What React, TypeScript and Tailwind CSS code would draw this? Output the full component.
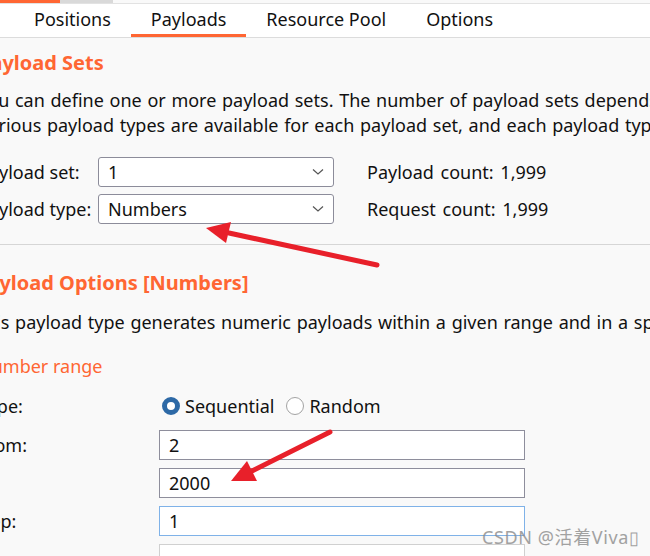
import React from "react";

const Chevron = () => (
  <svg width="12" height="8" viewBox="0 0 12 8" className="shrink-0">
    <path d="M1 1.5 L6 6 L11 1.5" fill="none" stroke="#555" strokeWidth="1.2" />
  </svg>
);

function Select({ value }: { value: string }) {
  return (
    <div className="flex h-[30px] w-[236px] items-center justify-between rounded-[3px] border border-[#8c8c9a] bg-white pl-[9px] pr-[9px]">
      <span>{value}</span>
      <Chevron />
    </div>
  );
}

function Field({ value, variant = "normal" }: { value: string; variant?: "normal" | "focus" | "light" }) {
  const border =
    variant === "focus"
      ? "border-[#7fb2e8]"
      : variant === "light"
      ? "border-[#d0d0d0]"
      : "border-[#8e8e9c]";
  return (
    <div className={`flex h-[30px] w-[366px] items-center border ${border} bg-white pl-[9px]`}>
      {value}
    </div>
  );
}

export default function App() {
  return (
    <div className="relative h-[556px] w-[650px] overflow-hidden bg-[#f9f9f9] font-['Noto_Sans','Noto_Sans_CJK_SC',sans-serif] text-[18px] text-[#111]">
      <div className="flex h-[3px]">
        <div className="w-[60px] bg-[#ff6633]" />
        <div className="w-[53px] bg-[#d9d9d9]" />
      </div>
      <div className="h-px bg-[#e2e2e2]" />
      <div className="flex h-[34px] border-b border-[#dcdcdc] bg-white pl-[14px] leading-none">
        <div className="flex items-center border-b-[3px] border-transparent px-5">Positions</div>
        <div className="flex items-center border-b-[3px] border-[#ff6633] px-5">Payloads</div>
        <div className="flex items-center border-b-[3px] border-transparent px-5">Resource Pool</div>
        <div className="flex items-center border-b-[3px] border-transparent px-5">Options</div>
      </div>

      <div className="-ml-[22px] w-[720px]">
        <div className="mt-[11px] text-[20px] font-bold leading-[28px] text-[#ff6633]">Payload Sets</div>
        <div className="mt-[11px] whitespace-nowrap leading-[25px] [word-spacing:1px]">
          <div>You can define one or more payload sets. The number of payload sets depends on the attack type</div>
          <div>Various payload types are available for each payload set, and each payload type can be customized</div>
        </div>

        <div className="mt-[19px] flex flex-col gap-[7px]">
          <div className="flex h-[30px] items-center">
            <div className="w-[120px]">Payload set:</div>
            <Select value="1" />
            <div className="ml-[33px] [word-spacing:2px]">Payload count: 1,999</div>
          </div>
          <div className="flex h-[30px] items-center">
            <div className="w-[120px]">Payload type:</div>
            <Select value="Numbers" />
            <div className="ml-[33px] [word-spacing:2px]">Request count: 1,999</div>
          </div>
        </div>
      </div>

      <div className="mt-[20px] h-px bg-[#d6d6d6]" />

      <div className="-ml-[22px] w-[720px]">
        <div className="mt-[24px] -ml-[3px] text-[20px] font-bold leading-[28px] text-[#ff6633]">Payload Options [Numbers]</div>
        <div className="mt-[13px] -ml-[3px] whitespace-nowrap leading-[25px] [word-spacing:1px]">
          This payload type generates numeric payloads within a given range and in a specified format.
        </div>
        <div className="mt-[19px] leading-[25px] text-[#ff6633]">Number range</div>

        <div className="mt-[12px] flex h-[30px] items-center">
          <div className="w-[181px]">Type:</div>
          <div className="ml-[3px] flex items-center gap-[5px]">
            <div className="h-[18px] w-[18px] rounded-full border-[5px] border-[#2d69a6] bg-white" />
            <span>Sequential</span>
            <div className="ml-[7px] h-[18px] w-[18px] rounded-full border border-[#a3a3a3] bg-white" />
            <span>Random</span>
          </div>
        </div>

        <div className="mt-[9px] flex flex-col gap-[8px]">
          <div className="flex items-center">
            <div className="w-[181px]">From:</div>
            <Field value="2" />
          </div>
          <div className="flex items-center">
            <div className="w-[181px] -translate-x-[4px]">To:</div>
            <Field value="2000" />
          </div>
          <div className="flex items-center">
            <div className="w-[181px] -translate-x-[4px]">Step:</div>
            <Field value="1" variant="focus" />
          </div>
          <div className="flex items-center">
            <div className="w-[181px]">How many:</div>
            <Field value="" variant="light" />
          </div>
        </div>
      </div>

      <svg className="pointer-events-none absolute left-0 top-0" width="650" height="556" viewBox="0 0 650 556">
        <line x1="377" y1="265" x2="229" y2="233" stroke="#e8202a" strokeWidth="5" strokeLinecap="round" />
        <polygon points="206,228 231,222 226,243" fill="#e8202a" />
        <line x1="330" y1="432" x2="252" y2="471" stroke="#e8202a" strokeWidth="5" strokeLinecap="round" />
        <polygon points="231,481 247,461 257,481" fill="#e8202a" />
      </svg>

      <div className="absolute left-[482px] top-[524px] whitespace-nowrap text-[18px] leading-[26px] tracking-[0.6px] text-[#8c8c8c] opacity-80">
        CSDN @活着Viva▯
      </div>
    </div>
  );
}
